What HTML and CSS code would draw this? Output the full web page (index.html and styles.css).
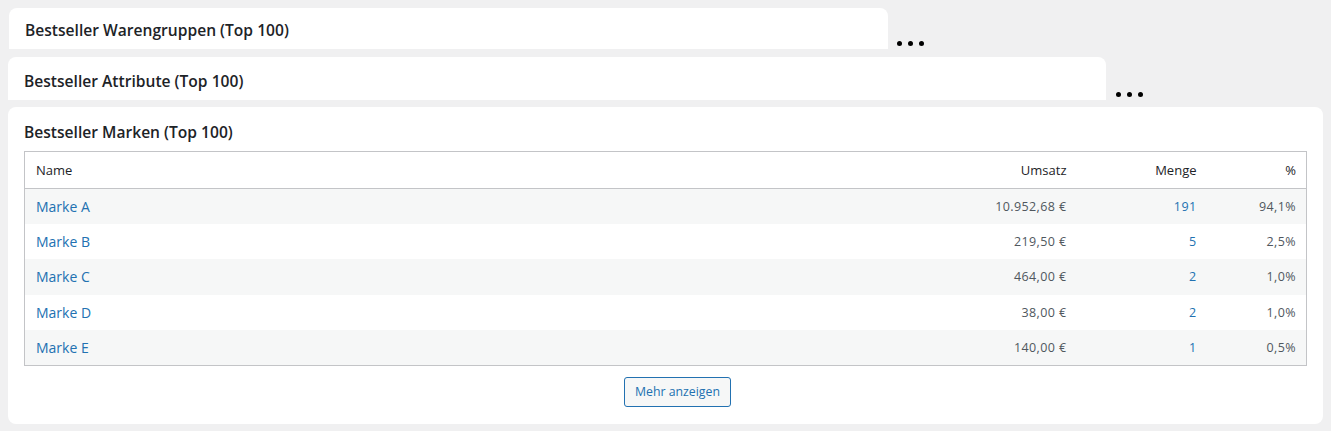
FILE: index.html
```html
<!DOCTYPE html>
<html lang="de">
<head>
  <meta charset="UTF-8">
  <title>Bestseller</title>
  <link rel="stylesheet" href="styles.css">
</head>
<body>
  <div class="widget-row">
    <div class="card card-collapsed card-groups">
      <h2>Bestseller Warengruppen (Top 100)</h2>
    </div>
    <span class="dots"><i></i><i></i><i></i></span>
  </div>

  <div class="widget-row">
    <div class="card card-collapsed card-attrs">
      <h2>Bestseller Attribute (Top 100)</h2>
    </div>
    <span class="dots"><i></i><i></i><i></i></span>
  </div>

  <div class="card card-brands">
    <h2>Bestseller Marken (Top 100)</h2>
    <table class="stats">
      <thead>
        <tr>
          <th class="col-name">Name</th>
          <th class="num col-sales">Umsatz</th>
          <th class="num col-qty">Menge</th>
          <th class="num col-pct">%</th>
        </tr>
      </thead>
      <tbody>
        <tr><td><a href="#">Marke A</a></td><td class="num">10.952,68 €</td><td class="num"><a href="#">191</a></td><td class="num">94,1%</td></tr>
        <tr><td><a href="#">Marke B</a></td><td class="num">219,50 €</td><td class="num"><a href="#">5</a></td><td class="num">2,5%</td></tr>
        <tr><td><a href="#">Marke C</a></td><td class="num">464,00 €</td><td class="num"><a href="#">2</a></td><td class="num">1,0%</td></tr>
        <tr><td><a href="#">Marke D</a></td><td class="num">38,00 €</td><td class="num"><a href="#">2</a></td><td class="num">1,0%</td></tr>
        <tr><td><a href="#">Marke E</a></td><td class="num">140,00 €</td><td class="num"><a href="#">1</a></td><td class="num">0,5%</td></tr>
      </tbody>
    </table>
    <div class="more">
      <button type="button">Mehr anzeigen</button>
    </div>
  </div>
</body>
</html>
```

FILE: styles.css
```css
*, *::before, *::after {
  box-sizing: border-box;
}
body {
  margin: 0;
  padding: 8px;
  background: #f0f0f1;
  font-family: "Open Sans", "Noto Sans", sans-serif;
  color: #3c434a;
}
h2 {
  margin: 0;
  font-size: 15.6px;
  line-height: 24px;
  font-weight: 600;
  color: #1d2327;
}
/* Widget cards */
.card {
  background: #fff;
  border-radius: 8px;
  padding: 13px 16px 16px;
}
.widget-row {
  display: flex;
  align-items: flex-end;
  margin-bottom: 8px;
}
.card-collapsed {
  overflow: hidden;
  border-radius: 8px 8px 0 0;
}
.card-groups {
  width: 879px;
  height: 41px;
  margin-left: 1px;
  padding-top: 10px;
}
.card-attrs {
  width: 1098px;
  height: 43px;
  margin-bottom: -1px;
  padding-top: 12px;
}
.dots {
  display: flex;
  gap: 6px;
  margin: 0 0 3px 9px;
}
.widget-row + .widget-row .dots {
  margin-left: 10px;
  margin-bottom: 2px;
}
.dots i {
  width: 5px;
  height: 5px;
  border-radius: 50%;
  background: #000;
}
.card-brands {
  width: 1315px;
  padding: 13px 16px 17px;
}
.card-brands h2 {
  margin-bottom: 7px;
}
/* Table */
.stats {
  width: 100%;
  border-collapse: collapse;
  border: 1px solid #c3c4c7;
  font-size: 13px;
}
.stats th {
  height: 37px;
  padding: 0 10px 0 11px;
  font-weight: 400;
  text-align: left;
  color: #1d2327;
  border-bottom: 1px solid #c3c4c7;
}
.stats td {
  height: 35.4px;
  padding: 0 10px 0 11px;
}
.stats tbody tr:nth-child(odd) {
  background: #f6f7f7;
}
.stats .num {
  text-align: right;
}
.stats td.num {
  font-size: 12.5px;
  letter-spacing: 0.4px;
  color: #50575e;
}
.stats a {
  color: #2271b1;
  text-decoration: none;
}
.stats td:first-child a {
  font-size: 14px;
}
.col-sales { width: 200px; }
.col-qty { width: 130px; }
.col-pct { width: 100px; }
/* Button */
.more {
  display: flex;
  justify-content: center;
  padding: 11px 0 0 24px;
}
.more button {
  height: 30px;
  padding: 0 10px;
  font-family: inherit;
  font-size: 12.3px;
  color: #2271b1;
  background: #f6f7f7;
  border: 1px solid #2271b1;
  border-radius: 3px;
}
```
